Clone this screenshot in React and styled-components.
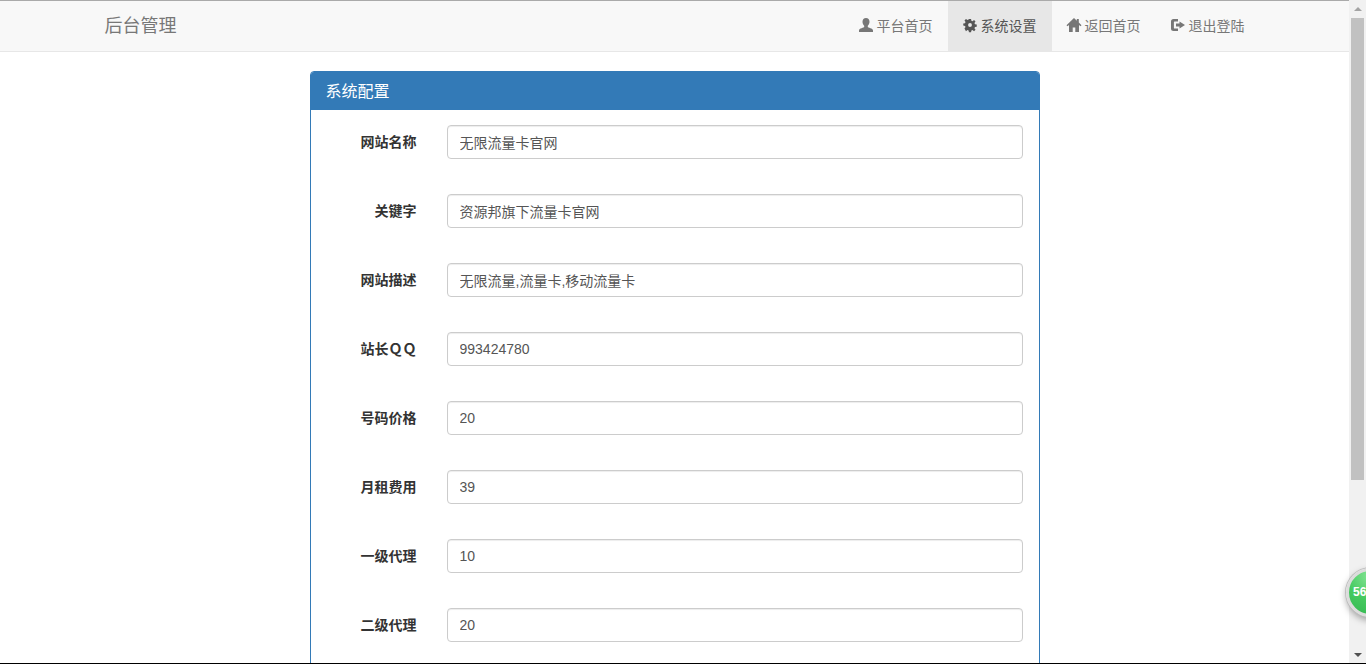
import React from 'react'
import styled, { createGlobalStyle } from 'styled-components'

const GlobalStyle = createGlobalStyle`
  html, body {
    margin: 0;
    height: 100%;
    overflow: hidden;
    background: #fff;
  }
  body {
    font-family: "Liberation Sans", "Noto Sans CJK SC", sans-serif;
    font-size: 14px;
    color: #333;
  }
  * {
    box-sizing: border-box;
  }
`

const Screen = styled.div`
  position: relative;
  display: flex;
  height: 664px;
  overflow: hidden;
  border-bottom: 1px solid #000;
`
const Page = styled.div`
  flex: 1;
  min-width: 0;
  overflow: hidden;
`
const Navbar = styled.nav`
  height: 52px;
  background: #f8f8f8;
  border-top: 1px solid #aaa;
  border-bottom: 1px solid #e7e7e7;
`
const NavInner = styled.div`
  width: 1170px;
  height: 50px;
  margin: 0 auto;
  padding: 0 0 0 15px;
  display: flex;
  justify-content: space-between;
`
const Brand = styled.a`
  font-size: 18px;
  line-height: 50px;
  color: #777;
`
const NavList = styled.ul`
  display: flex;
  margin: 0;
  padding: 0;
  list-style: none;
`
const NavItem = styled.li`
  display: flex;
  align-items: center;
  gap: 4px;
  height: 50px;
  padding: 0 15px 2px;
  color: ${(p) => (p.$active ? '#555' : '#777')};
  background: ${(p) => (p.$active ? '#e7e7e7' : 'transparent')};
`
const NavIcon = styled.svg`
  width: 14px;
  height: 14px;
  fill: currentColor;
  flex: none;
  overflow: visible;
`
const Panel = styled.section`
  width: 730px;
  margin: 19px auto 0;
  border: 1px solid #337ab7;
  border-radius: 4px;
`
const PanelHeading = styled.h3`
  margin: 0;
  padding: 11px 15px 9px;
  height: 38px;
  font-size: 16px;
  font-weight: 400;
  line-height: 18px;
  color: #fff;
  background: #337ab7;
  border-radius: 3px 3px 0 0;
`
const PanelBody = styled.form`
  display: flex;
  flex-direction: column;
  gap: 35px;
  padding: 15px 16px 40px 15px;
`
const FormRow = styled.div`
  display: grid;
  grid-template-columns: 91px 576px;
  column-gap: 30px;
  align-items: center;
`
const RowLabel = styled.label`
  padding-bottom: 2px;
  font-weight: 700;
  text-align: right;
  color: #333;
`
const TextInput = styled.input`
  width: 100%;
  height: 34px;
  padding: 6px 12px;
  font: inherit;
  color: #555;
  background: #fff;
  border: 1px solid #ccc;
  border-radius: 4px;
  box-shadow: inset 0 1px 1px rgba(0, 0, 0, 0.075);
  outline: none;
`
const ScrollTrack = styled.div`
  flex: none;
  display: flex;
  flex-direction: column;
  align-items: center;
  width: 17px;
  background: #f1f1f1;
`
const ScrollArrow = styled.div`
  flex: none;
  width: 0;
  height: 0;
  margin: ${(p) => (p.$down ? 'auto 0 6px' : '7px 0 7px')};
  border-left: 4px solid transparent;
  border-right: 4px solid transparent;
  border-bottom: ${(p) => (p.$down ? '0' : '4px solid #a3a3a3')};
  border-top: ${(p) => (p.$down ? '4px solid #505050' : '0')};
`
const ScrollThumb = styled.div`
  width: 13px;
  height: 462px;
  background: #c1c1c1;
`
const Bubble = styled.div`
  position: absolute;
  left: 1346px;
  top: 568px;
  width: 49px;
  height: 49px;
  padding-left: 4px;
  border-radius: 50%;
  border: 3px solid #dcdcdc;
  background: radial-gradient(circle at 50% 10%, #86e596, #45c95f 55%, #35b852);
  box-shadow: 0 0 0 1px #bdbdbd, 0 3px 7px rgba(0, 0, 0, 0.35);
  color: #fff;
  font-size: 12px;
  font-weight: 700;
  line-height: 43px;
`

const UserIcon = () => (
  <NavIcon viewBox="0 0 14 14">
    <path d="M7 0c2.200 0 3.500 1.600 3.500 3.800 0 1.600-.8 3.200-1.700 3.900v1.200c0 .6 5.200 1.200 5.200 3.600V14H0v-1.500c0-2.400 5.200-3 5.200-3.600V7.700C4.300 7 3.500 5.400 3.500 3.800 3.500 1.600 4.800 0 7 0z" />
  </NavIcon>
)

const CogIcon = () => (
  <NavIcon viewBox="-1 -1 16 16">
    <path fillRule="evenodd" d="M5.800 0h2.400l.4 2 1.300.6 1.700-1.200 1.700 1.700-1.200 1.700.6 1.300 2 .4v2.400l-2 .4-.6 1.300 1.200 1.700-1.700 1.700-1.700-1.200-1.300.6-.4 2H5.800l-.4-2-1.300-.6-1.700 1.200L.7 11.100l1.200-1.700-.6-1.300-2-.4V5.300l2-.4.6-1.300L.7 1.900 2.400.2l1.700 1.200 1.300-.6zM7 4.800a2.200 2.200 0 1 0 0 4.400 2.200 2.200 0 0 0 0-4.400z" />
  </NavIcon>
)

const HomeIcon = () => (
  <NavIcon viewBox="0 0 14 14">
    <path d="M7 0L-.5 7.200l1 1L2 6.900V14h3.700V9.500h2.600V14H12V6.900l1.500 1.300 1-1L11.800 4.600V1H9.800v1.700z" />
  </NavIcon>
)

const LogoutIcon = () => (
  <NavIcon viewBox="0 0 14 14">
    <path d="M2.500 1H7v2.400H3.500a.6.600 0 0 0-.6.6v6c0 .3.300.6.600.6H7V13H2.500A2.500 2.500 0 0 1 0 10.500v-7A2.500 2.500 0 0 1 2.500 1z" />
    <path d="M8.500 3.400L14 7l-5.500 3.600V8.500H5v-3h3.500z" />
  </NavIcon>
)

const navItems = [
  { label: '平台首页', icon: <UserIcon /> },
  { label: '系统设置', icon: <CogIcon />, active: true },
  { label: '返回首页', icon: <HomeIcon /> },
  { label: '退出登陆', icon: <LogoutIcon /> },
]

const fields = [
  { label: '网站名称', value: '无限流量卡官网' },
  { label: '关键字', value: '资源邦旗下流量卡官网' },
  { label: '网站描述', value: '无限流量,流量卡,移动流量卡' },
  { label: '站长ＱＱ', value: '993424780' },
  { label: '号码价格', value: '20' },
  { label: '月租费用', value: '39' },
  { label: '一级代理', value: '10' },
  { label: '二级代理', value: '20' },
]

const App = () => {
  return (
    <Screen>
      <GlobalStyle />
      <Page>
        <Navbar>
          <NavInner>
            <Brand>后台管理</Brand>
            <NavList>
              {navItems.map((item) => (
                <NavItem key={item.label} $active={item.active}>
                  {item.icon}
                  {item.label}
                </NavItem>
              ))}
            </NavList>
          </NavInner>
        </Navbar>
        <Panel>
          <PanelHeading>系统配置</PanelHeading>
          <PanelBody>
            {fields.map((field) => (
              <FormRow key={field.label}>
                <RowLabel>{field.label}</RowLabel>
                <TextInput defaultValue={field.value} />
              </FormRow>
            ))}
          </PanelBody>
        </Panel>
      </Page>
      <ScrollTrack>
        <ScrollArrow />
        <ScrollThumb />
        <ScrollArrow $down />
      </ScrollTrack>
      <Bubble>56</Bubble>
    </Screen>
  )
}

export default App
